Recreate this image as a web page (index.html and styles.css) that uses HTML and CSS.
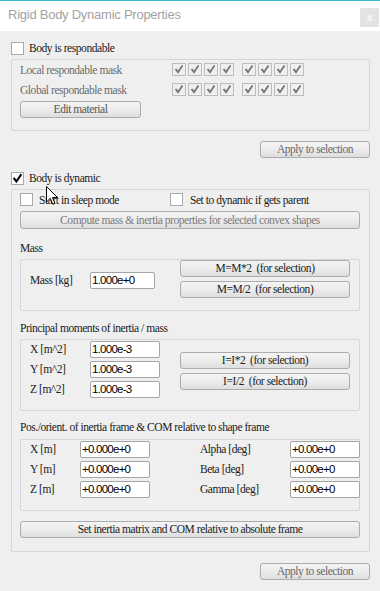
FILE: index.html
```html
<!DOCTYPE html>
<html lang="en">
<head>
    <meta charset="UTF-8">
    <title>Rigid Body Dynamic Properties</title>
    <link rel="stylesheet" href="styles.css">
</head>
<body>
    <svg class="defs" width="0" height="0">
        <symbol id="tick" viewBox="0 0 12 12">
            <path d="M2.5 6.2 L4.8 9.3 L9.6 2.2" fill="none" stroke="currentColor" stroke-width="2.2" stroke-linecap="square"/>
        </symbol>
    </svg>
    <div class="window">
        <div class="titlebar">
            <span class="title">Rigid Body Dynamic Properties</span>
            <span class="close">x</span>
        </div>
        <div class="content">
            <div class="check-row">
                <span class="cb"></span>
                <span>Body is respondable</span>
            </div>
            <div class="group resp-group">
                <div class="mask-row">
                    <span class="mask-label">Local respondable mask</span>
                    <div class="mask">
                        <span class="mb"><svg><use href="#tick"/></svg></span>
                        <span class="mb"><svg><use href="#tick"/></svg></span>
                        <span class="mb"><svg><use href="#tick"/></svg></span>
                        <span class="mb"><svg><use href="#tick"/></svg></span>
                    </div>
                    <div class="mask">
                        <span class="mb"><svg><use href="#tick"/></svg></span>
                        <span class="mb"><svg><use href="#tick"/></svg></span>
                        <span class="mb"><svg><use href="#tick"/></svg></span>
                        <span class="mb"><svg><use href="#tick"/></svg></span>
                    </div>
                </div>
                <div class="mask-row">
                    <span class="mask-label">Global respondable mask</span>
                    <div class="mask">
                        <span class="mb"><svg><use href="#tick"/></svg></span>
                        <span class="mb"><svg><use href="#tick"/></svg></span>
                        <span class="mb"><svg><use href="#tick"/></svg></span>
                        <span class="mb"><svg><use href="#tick"/></svg></span>
                    </div>
                    <div class="mask">
                        <span class="mb"><svg><use href="#tick"/></svg></span>
                        <span class="mb"><svg><use href="#tick"/></svg></span>
                        <span class="mb"><svg><use href="#tick"/></svg></span>
                        <span class="mb"><svg><use href="#tick"/></svg></span>
                    </div>
                </div>
                <button class="btn edit-btn">Edit material</button>
            </div>
            <div class="apply-row">
                <button class="btn apply-btn">Apply to selection</button>
            </div>

            <div class="check-row dyn-row">
                <span class="cb checked"><svg><use href="#tick"/></svg></span>
                <span>Body is dynamic</span>
            </div>
            <div class="group dyn-group">
                <div class="sleep-row">
                    <div class="check-row sleep">
                        <span class="cb"></span>
                        <span>Start in sleep mode</span>
                    </div>
                    <div class="check-row parent">
                        <span class="cb"></span>
                        <span>Set to dynamic if gets parent</span>
                    </div>
                </div>
                <button class="btn wide-btn dim">Compute mass &amp; inertia properties for selected convex shapes</button>

                <div class="section-label mass-label">Mass</div>
                <div class="group mass-group">
                    <div class="field-col">
                        <div class="field">
                            <span class="flabel">Mass [kg]</span>
                            <span class="input mass-input">1.000e+0</span>
                        </div>
                    </div>
                    <div class="btn-col">
                        <button class="btn side-btn">M=M*2&nbsp; (for selection)</button>
                        <button class="btn side-btn">M=M/2&nbsp; (for selection)</button>
                    </div>
                </div>

                <div class="section-label">Principal moments of inertia / mass</div>
                <div class="group inertia-group">
                    <div class="field-col">
                        <div class="field">
                            <span class="flabel">X [m^2]</span>
                            <span class="input">1.000e-3</span>
                        </div>
                        <div class="field">
                            <span class="flabel">Y [m^2]</span>
                            <span class="input">1.000e-3</span>
                        </div>
                        <div class="field">
                            <span class="flabel">Z [m^2]</span>
                            <span class="input">1.000e-3</span>
                        </div>
                    </div>
                    <div class="btn-col inertia-btns">
                        <button class="btn side-btn">I=I*2&nbsp; (for selection)</button>
                        <button class="btn side-btn">I=I/2&nbsp; (for selection)</button>
                    </div>
                </div>

                <div class="section-label pos-label">Pos./orient. of inertia frame &amp; COM relative to shape frame</div>
                <div class="group pos-group">
                    <span class="flabel">X [m]</span>
                    <span class="input">+0.000e+0</span>
                    <span></span>
                    <span class="flabel">Alpha [deg]</span>
                    <span class="input">+0.00e+0</span>

                    <span class="flabel">Y [m]</span>
                    <span class="input">+0.000e+0</span>
                    <span></span>
                    <span class="flabel">Beta [deg]</span>
                    <span class="input">+0.00e+0</span>

                    <span class="flabel">Z [m]</span>
                    <span class="input">+0.000e+0</span>
                    <span></span>
                    <span class="flabel">Gamma [deg]</span>
                    <span class="input">+0.00e+0</span>
                </div>
                <button class="btn wide-btn set-btn">Set inertia matrix and COM relative to absolute frame</button>
            </div>
            <div class="apply-row apply-bottom">
                <button class="btn apply-btn">Apply to selection</button>
            </div>
        </div>

        <svg class="cursor" width="13" height="20" viewBox="0 0 13 20">
            <path d="M0.5 0.5 L0.5 16 L4.3 12.3 L6.8 18.3 L9 17.4 L6.5 11.5 L11.5 11.5 Z" fill="#fff" stroke="#000" stroke-width="1"/>
        </svg>
    </div>
</body>
</html>
```

FILE: styles.css
```css
* {
    box-sizing: border-box;
}

body {
    margin: 0;
    background: #efefef;
    font-family: "Liberation Serif", "Times New Roman", serif;
    font-size: 11.5px;
    letter-spacing: -0.45px;
    color: #1a1a1a;
}

.defs {
    position: absolute;
}

.window {
    position: relative;
    width: 380px;
    height: 591px;
    background: #efefef;
    overflow: hidden;
}

.titlebar {
    display: flex;
    align-items: flex-start;
    height: 31px;
    background: #fff;
    border-top: 1px solid #3db5c9;
}

.title {
    padding: 6px 0 0 8px;
    font-family: "Liberation Sans", Arial, sans-serif;
    font-size: 13px;
    letter-spacing: -0.25px;
    color: #a3a3a3;
}

.close {
    margin: 7px 1px 0 auto;
    width: 19px;
    height: 19px;
    background: #e3e3e3;
    color: #fafafa;
    font-family: "Liberation Sans", Arial, sans-serif;
    font-weight: bold;
    font-size: 11px;
    letter-spacing: 0;
    line-height: 18px;
    text-align: center;
}

.content {
    padding: 10px 10px 0 11px;
}

.check-row {
    display: flex;
    align-items: center;
    gap: 5px;
    height: 14px;
    line-height: 14px;
}

.cb {
    width: 13px;
    height: 13px;
    background: #fff;
    border: 1px solid #a8a8a8;
    color: #000;
    display: flex;
}

.cb svg,
.mb svg {
    width: 100%;
    height: 100%;
}

.group {
    border: 1px solid #d6d6d6;
    border-radius: 2px;
}

.resp-group {
    margin-top: 4px;
    height: 72px;
    padding: 3px 0 0 8px;
}

.mask-row {
    display: flex;
    align-items: center;
    height: 13px;
    margin-bottom: 7px;
    color: #6a6a6a;
}

.mask-label {
    width: 152px;
}

.mask {
    display: flex;
    gap: 2px;
    margin-right: 8px;
}

.mb {
    width: 14px;
    height: 13px;
    border: 1px solid #bdbdbd;
    background: #efefef;
    color: #757575;
    display: flex;
    padding: 0 1px;
}

.btn {
    display: block;
    height: 17px;
    padding: 0;
    border: 1px solid #acacac;
    border-radius: 3px;
    background: linear-gradient(#f4f4f4 0%, #ececec 50%, #dedede 100%);
    font-family: inherit;
    font-size: inherit;
    letter-spacing: inherit;
    color: #222;
    text-align: center;
    line-height: 15px;
}

.edit-btn {
    width: 121px;
    margin-top: -2px;
    color: #555;
}

.apply-row {
    display: flex;
    justify-content: flex-end;
    margin-top: 10px;
}

.apply-btn {
    width: 110px;
    color: #666;
}

.dyn-row {
    margin-top: 13px;
}

.dyn-group {
    margin-top: 4px;
    height: 363px;
    padding: 3px 9px 0 8px;
}

.sleep-row {
    display: flex;
    height: 13px;
}

.sleep {
    width: 150px;
    height: 13px;
    gap: 6px;
}

.parent {
    height: 13px;
    gap: 7px;
}

.wide-btn {
    width: 340px;
    margin-top: 5px;
}

.wide-btn.dim {
    height: 18px;
    line-height: 16px;
    color: #7a7a7a;
}

.section-label {
    height: 14px;
    line-height: 14px;
    margin-top: 10px;
}

.mass-label {
    margin-top: 12px;
}

.pos-label {
    margin-top: 9px;
}

.mass-group,
.inertia-group {
    display: flex;
    margin-top: 4px;
    padding-left: 9px;
}

.mass-group {
    height: 52px;
}

.inertia-group {
    height: 72px;
}

.field-col {
    display: flex;
    flex-direction: column;
    gap: 3px;
    width: 150px;
    padding-top: 1px;
}

.mass-group .field-col {
    padding-top: 12px;
}

.field {
    display: flex;
    align-items: center;
    height: 17px;
}

.flabel {
    width: 60px;
    line-height: 17px;
}

.input {
    display: block;
    height: 17px;
    width: 70px;
    border: 1px solid #a5a5a5;
    border-radius: 2px;
    background: #fff;
    padding-left: 1px;
    font-family: "Liberation Sans", Arial, sans-serif;
    font-size: 11.5px;
    letter-spacing: -0.75px;
    line-height: 15px;
    color: #000;
}

.mass-input {
    width: 65px;
}

.btn-col {
    display: flex;
    flex-direction: column;
    gap: 4px;
}

.inertia-btns {
    padding-top: 12px;
}

.side-btn {
    width: 170px;
}

.pos-group {
    display: grid;
    grid-template-columns: 50px 70px 50px 90px 60px;
    grid-auto-rows: 17px;
    row-gap: 3px;
    align-items: center;
    margin-top: 5px;
    height: 72px;
    padding: 1px 0 0 9px;
}

.set-btn {
    margin-top: 10px;
}

.apply-bottom {
    margin-top: 11px;
}

.cursor {
    position: absolute;
    left: 46px;
    top: 186px;
}
```
